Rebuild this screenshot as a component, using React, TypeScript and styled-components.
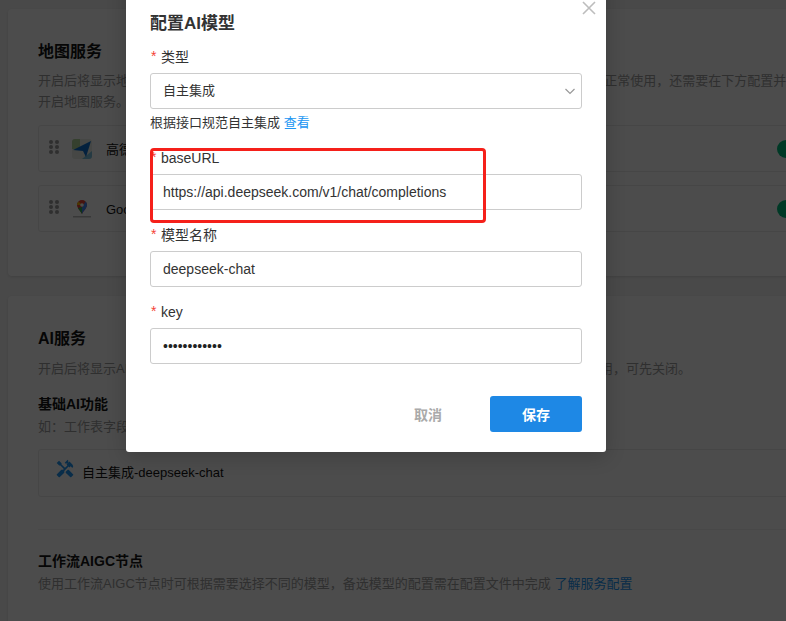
import React from "react";
import styled, { createGlobalStyle } from "styled-components";
import { MdHandyman } from "react-icons/md";

const Global = createGlobalStyle`
  html, body { margin: 0; padding: 0; height: 100%; overflow: hidden; background: #f5f5f5; }
  body { font-family: "Liberation Sans", "Noto Sans CJK SC", sans-serif; color: #333; }
  * { box-sizing: border-box; }
`;

const Page = styled.main`
  width: 786px;
  height: 621px;
  overflow: hidden;
  position: relative;
  padding: 9px 0 0 8px;
  display: flex;
  flex-direction: column;
  gap: 20px;
`;

const Card = styled.section<{ $height: number }>`
  width: 1000px;
  height: ${(p) => p.$height}px;
  flex: none;
  background: #fff;
  border-radius: 4px;
  padding: 31px 30px 30px;
  box-shadow: 0 1px 3px rgba(0, 0, 0, 0.12);
`;

const CardTitle = styled.h2`
  margin: 0;
  font-size: 16px;
  line-height: 24px;
  font-weight: 700;
  color: #151515;
`;

const Desc = styled.p<{ $top: number }>`
  margin: ${(p) => p.$top}px 0 1px;
  font-size: 13px;
  line-height: 21px;
  color: #9e9e9e;
  white-space: nowrap;
`;

const ServiceRow = styled.div`
  display: flex;
  align-items: center;
  height: 47px;
  margin-top: 13px;
  padding: 0 10px;
  border: 1px solid #eaeaea;
  border-radius: 3px;
  font-size: 13px;
  color: #151515;
`;

const DragDots = styled.svg`
  width: 10px;
  height: 14px;
  flex: none;
  margin-top: -4px;
`;

const Logo = styled.svg`
  width: 20px;
  height: 20px;
  flex: none;
  margin: 0 14px 0 13px;
`;

const ServiceName = styled.span`
  flex: 1;
`;

const Toggle = styled.span`
  width: 36px;
  height: 18px;
  border-radius: 9px;
  background: #00c07f;
  margin-right: 154px;
`;

const SubTitle = styled.h3<{ $top: number }>`
  margin: ${(p) => p.$top}px 0 0;
  font-size: 14px;
  line-height: 22px;
  font-weight: 700;
  color: #151515;
`;

const SubDesc = styled.p`
  margin: 2px 0 0;
  font-size: 13px;
  line-height: 20px;
  color: #9e9e9e;
  white-space: nowrap;
`;

const DimLink = styled.span`
  color: #2196f3;
`;

const ModelRow = styled.div`
  display: flex;
  align-items: center;
  height: 48px;
  margin-top: 12px;
  padding: 0 16px 3px;
  border: 1px solid #eaeaea;
  border-radius: 3px;
  font-size: 13px;
  color: #151515;
`;

const ToolIcon = styled(MdHandyman)`
  width: 20px;
  height: 20px;
  color: #2196f3;
  margin: 0 7px 5px 0;
`;

const Divider = styled.hr`
  border: 0;
  border-top: 1px solid #f0f0f0;
  margin: 32px 0 0;
`;

const Mask = styled.div`
  position: absolute;
  inset: 0;
  background: rgba(0, 0, 0, 0.7);
`;

const Modal = styled.div`
  position: absolute;
  left: 126px;
  top: -40px;
  width: 480px;
  height: 492px;
  background: #fff;
  border-radius: 3px;
  padding: 49px 24px 20px;
  box-shadow: 0 4px 20px rgba(0, 0, 0, 0.2);
  display: flex;
  flex-direction: column;
`;

const ModalTitle = styled.h1`
  margin: 0 0 8px;
  font-size: 17px;
  line-height: 30px;
  font-weight: 700;
  color: #333;
`;

const Close = styled.svg`
  position: absolute;
  right: 10px;
  top: 41px;
  width: 14px;
  height: 14px;
`;

const Field = styled.div<{ $gap?: number }>`
  margin-top: ${(p) => p.$gap ?? 0}px;
`;

const Label = styled.label`
  display: block;
  position: relative;
  height: 20px;
  line-height: 20px;
  margin-bottom: 6px;
  padding-left: 11px;
  font-size: 14px;
  color: #333;
  &::before {
    content: "*";
    position: absolute;
    left: 1px;
    top: -1px;
    color: #f44336;
    font-size: 14px;
  }
`;

const Control = styled.div`
  height: 36px;
  border: 1px solid #ccc;
  border-radius: 3px;
  padding: 0 12px;
  display: flex;
  align-items: center;
  justify-content: space-between;
  font-size: 14px;
  color: #333;
`;

const SelectControl = styled(Control)`
  font-size: 13px;
  padding-bottom: 3px;
`;

const Chevron = styled.svg`
  width: 12px;
  height: 12px;
  margin: 3px -7px 0 0;
`;

const Help = styled.div`
  margin-top: 4px;
  font-size: 13px;
  line-height: 20px;
  color: #333;
`;

const HelpLink = styled.a`
  color: #2196f3;
`;

const Masked = styled.span`
  font-size: 14px;
  color: #222;
`;

const Footer = styled.footer`
  margin-top: auto;
  display: flex;
  justify-content: flex-end;
  align-items: center;
`;

const CancelButton = styled.button`
  width: 92px;
  height: 36px;
  margin-right: 16px;
  border: 0;
  background: transparent;
  font: inherit;
  font-size: 14px;
  font-weight: 700;
  color: #aaa;
`;

const SaveButton = styled.button`
  width: 92px;
  height: 36px;
  border: 0;
  border-radius: 3px;
  background: #1e88e5;
  font: inherit;
  font-size: 14px;
  font-weight: 700;
  color: #fff;
`;

const Annotation = styled.div`
  position: absolute;
  left: 24px;
  top: 188px;
  width: 336px;
  height: 75px;
  border: 3px solid #f5201a;
  border-radius: 4px;
  pointer-events: none;
`;

const Dots = () => (
  <DragDots viewBox="0 0 10 14">
    {[2, 7, 12].map((y) =>
      [2, 8].map((x) => <circle key={`${x}-${y}`} cx={x} cy={y} r="2" fill="#9e9e9e" />)
    )}
  </DragDots>
);

export default function App() {
  return (
    <>
      <Global />
      <Page>
        <Card $height={267}>
          <CardTitle>地图服务</CardTitle>
          <Desc $top={6}>
            开启后将显示地图 相关控件，用户可在工作表中使用地图选点定位等能力的地图，但要让这些功能
            正常使用，还需要在下方配置并
            <br />
            开启地图服务。
          </Desc>
          <ServiceRow>
            <Dots />
            <Logo viewBox="0 0 20 20">
              <rect width="20" height="20" rx="3" fill="#e9efe6" />
              <path d="M0 3a3 3 0 0 1 3-3h5v10H0z" fill="#b3d59a" />
              <path d="M10 20l10-8v5a3 3 0 0 1-3 3z" fill="#7cc4e0" />
              <path d="M1 11L19 2l-5 16-3-6z" fill="#0f6fd0" />
            </Logo>
            <ServiceName>高德地图</ServiceName>
            <Toggle />
          </ServiceRow>
          <ServiceRow>
            <Dots />
            <Logo viewBox="0 0 20 20">
              <path d="M10 1a5 5 0 0 1 5 5c0 3-3 5-5 9-2-4-5-6-5-9a5 5 0 0 1 5-5z" fill="#ea4335" />
              <path d="M10 8.5L13.5 2.500A5 5 0 0 1 15 6c0 3-3 5-5 9z" fill="#4285f4" />
              <path d="M6 9l4-1 0 7c-1.500-2.500-3-4-4-6z" fill="#34a853" />
              <path d="M5 6a5 5 0 0 1 1.500-3.500L10 6z" fill="#fbbc04" />
              <circle cx="10" cy="6" r="1.800" fill="#fff" />
              <rect x="1" y="17" width="18" height="1.500" fill="#bbb" />
            </Logo>
            <ServiceName>Google地图</ServiceName>
            <Toggle />
          </ServiceRow>
        </Card>
        <Card $height={400}>
          <CardTitle>AI服务</CardTitle>
          <Desc $top={7}>
            开启后将显示AI 相关功能入口，如工作表字段、工作流节点等能力，用户可按需配置；若不需要使用，可先关闭。
          </Desc>
          <SubTitle $top={14}>基础AI功能</SubTitle>
          <SubDesc>如：工作表字段智能填充、内容摘要</SubDesc>
          <ModelRow>
            <ToolIcon />
            自主集成-deepseek-chat
          </ModelRow>
          <Divider />
          <SubTitle $top={20}>工作流AIGC节点</SubTitle>
          <SubDesc>
            使用工作流AIGC节点时可根据需要选择不同的模型，备选模型的配置需在配置文件中完成 <DimLink>了解服务配置</DimLink>
          </SubDesc>
        </Card>
        <Mask />
        <Modal>
          <Close viewBox="0 0 14 14">
            <path d="M1 1l12 12M13 1L1 13" stroke="#bdbdbd" strokeWidth="1.600" fill="none" />
          </Close>
          <ModalTitle>配置AI模型</ModalTitle>
          <Field>
            <Label>类型</Label>
            <SelectControl>
              自主集成
              <Chevron viewBox="0 0 12 12">
                <path d="M1.500 4l4.500 4.500L10.500 4" stroke="#999" strokeWidth="1.200" fill="none" />
              </Chevron>
            </SelectControl>
            <Help>
              根据接口规范自主集成 <HelpLink>查看</HelpLink>
            </Help>
          </Field>
          <Field $gap={15}>
            <Label>baseURL</Label>
            <Control>https://api.deepseek.com/v1/chat/completions</Control>
          </Field>
          <Field $gap={15}>
            <Label>模型名称</Label>
            <Control>deepseek-chat</Control>
          </Field>
          <Field $gap={15}>
            <Label>key</Label>
            <Control>
              <Masked>••••••••••••</Masked>
            </Control>
          </Field>
          <Footer>
            <CancelButton>取消</CancelButton>
            <SaveButton>保存</SaveButton>
          </Footer>
          <Annotation />
        </Modal>
      </Page>
    </>
  );
}
